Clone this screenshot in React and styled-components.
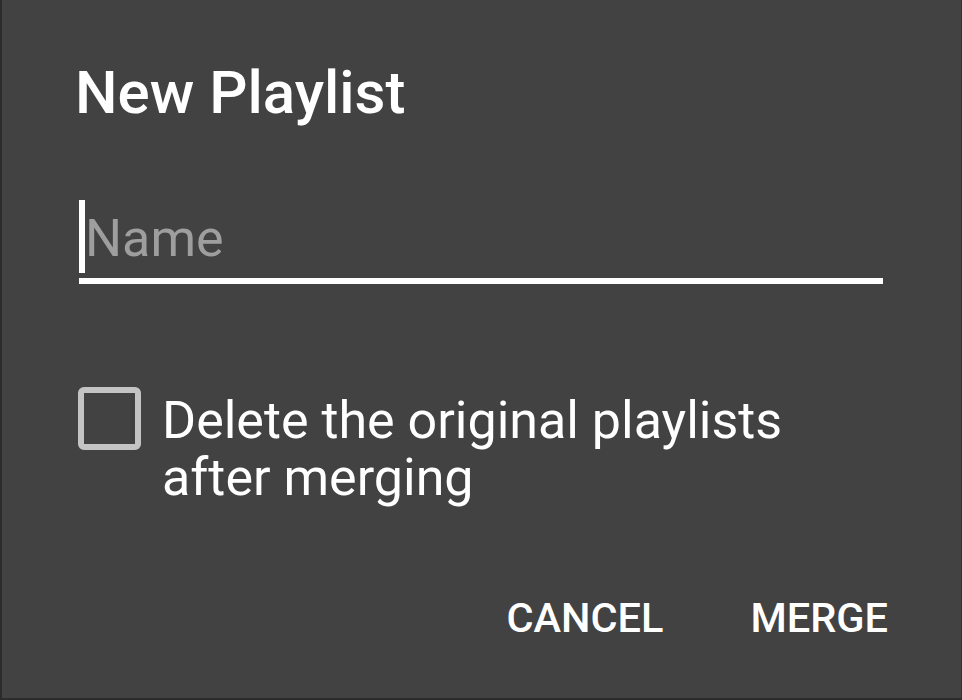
import React from "react"
import styled, { createGlobalStyle } from "styled-components"

const GlobalStyle = createGlobalStyle`
  html, body {
    margin: 0;
    padding: 0;
    background: #424242;
  }
  body {
    font-family: Roboto, "Liberation Sans", Arial, sans-serif;
  }
`;

const Dialog = styled.div`
  box-sizing: border-box;
  width: 962px;
  height: 700px;
  display: flex;
  flex-direction: column;
  background: #424242;
  border-left: 2px solid #2c2c2c;
  border-right: 1px solid #333333;
  border-bottom: 2px solid #2c2c2c;
  padding: 0 78px 0 77px;
  color: #ffffff;
`;

const Title = styled.h1`
  margin: 59px 0 0 -4px;
  font-size: 60px;
  line-height: 68px;
  font-weight: 500;
  letter-spacing: 0;
`;

const Field = styled.div`
  margin-top: 72px;
  display: flex;
  align-items: center;
  height: 74px;
  border-bottom: 6px solid #ffffff;
  padding-bottom: 5px;
`;

const Caret = styled.span`
  width: 6px;
  height: 73px;
  background: #ffffff;
  flex-shrink: 0;
`;

const Hint = styled.span`
  margin-top: 6px;
  font-size: 52px;
  line-height: 1;
  color: #9e9e9e;
`;

const CheckRow = styled.label`
  margin-top: 103px;
  margin-left: -1px;
  display: flex;
  align-items: flex-start;
  gap: 21px;
`;

const Box = styled.span`
  box-sizing: border-box;
  width: 63px;
  height: 63px;
  border: 6px solid #c4c4c4;
  border-radius: 6px;
  flex-shrink: 0;
`;

const Label = styled.span`
  margin-top: 5px;
  font-size: 52px;
  line-height: 57px;
  color: #ffffff;
`;

const Actions = styled.div`
  margin-top: auto;
  margin-bottom: 60px;
  margin-right: -5px;
  display: flex;
  justify-content: flex-end;
  gap: 87px;
`;

const ActionButton = styled.button`
  background: none;
  border: none;
  padding: 0;
  font-family: Roboto, "Liberation Sans", Arial, sans-serif;
  font-size: 41.5px;
  line-height: 1;
  font-weight: 500;
  color: #ffffff;
  text-transform: uppercase;
`;

const App = () => (
  <>
    <GlobalStyle />
    <Dialog>
      <Title>New Playlist</Title>
      <Field>
        <Caret />
        <Hint>Name</Hint>
      </Field>
      <CheckRow>
        <Box />
        <Label>
          Delete the original playlists
          <br />
          after merging
        </Label>
      </CheckRow>
      <Actions>
        <ActionButton>Cancel</ActionButton>
        <ActionButton>Merge</ActionButton>
      </Actions>
    </Dialog>
  </>
)

export default App
